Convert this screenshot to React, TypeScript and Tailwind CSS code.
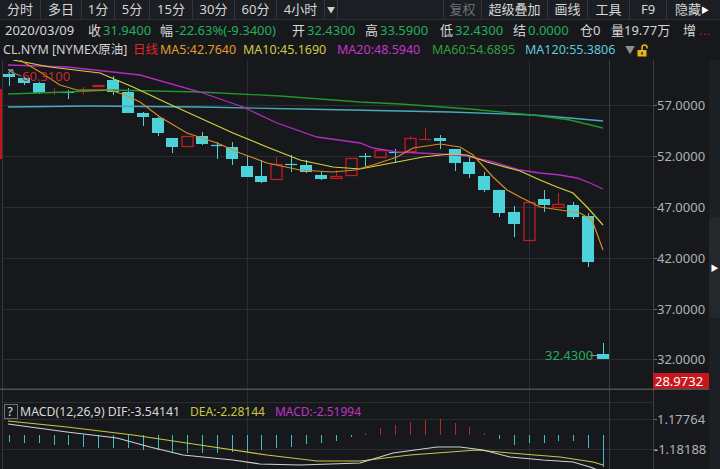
import React from "react";

const FONT = '"Noto Sans", "Noto Sans CJK SC", sans-serif';
const CYAN = "#4cd3d9";
const RED = "#c41c22";

const C = (i: number) => Math.round(9 + 14.85 * i) + 0.5;

type K = "c" | "cd" | "r" | "rd";
const candles: [K, number, number, number, number][] = [
  ["c", 74, 77, 73, 86],
  ["c", 78, 83, 77, 85],
  ["c", 83, 93, 82, 94],
  ["rd", 92, 92, 88, 95],
  ["cd", 92, 92, 90, 99],
  ["rd", 91, 91, 87, 95],
  ["r", 85, 87, 85, 87],
  ["c", 80, 92, 76, 95],
  ["c", 92, 113, 88, 113],
  ["c", 113, 117, 112, 126],
  ["c", 118, 133, 117, 136],
  ["c", 138, 147, 138, 153],
  ["r", 136, 147, 136, 147],
  ["c", 136, 144, 132, 145],
  ["cd", 145, 145, 142, 159],
  ["c", 147, 159, 142, 165],
  ["c", 166, 177, 156, 177],
  ["c", 176, 182, 160, 183],
  ["r", 164, 180, 157, 180],
  ["cd", 164, 164, 155, 172],
  ["c", 165, 172, 160, 173],
  ["c", 175, 179, 172, 180],
  ["r", 176, 179, 170, 179],
  ["r", 158, 176, 158, 176],
  ["cd", 156, 156, 153, 167],
  ["r", 150, 158, 150, 158],
  ["cd", 152, 152, 149, 163],
  ["r", 138, 152, 136, 152],
  ["rd", 139, 139, 128, 139],
  ["c", 138, 141, 135, 149],
  ["c", 149, 163, 149, 171],
  ["c", 162, 174, 156, 178],
  ["c", 176, 190, 172, 192],
  ["c", 190, 213, 190, 217],
  ["c", 212, 224, 206, 237],
  ["r", 202, 241, 202, 241],
  ["c", 199, 205, 190, 212],
  ["r", 204, 208, 193, 208],
  ["c", 205, 217, 202, 219],
  ["c", 216, 262, 213, 267],
  ["c", 354, 359, 343, 359],
];

const pts = (a: number[][]) => a.map((p) => p.join(",")).join(" ");

const ma5 = [[20,60],[40,72],[60,85],[77,90],[110,90],[125,95],[140,102],[160,117],[187,133],[217,143],[240,153],[267,163],[300,170],[333,172],[355,170],[373,165],[397,157],[413,148],[440,144],[460,147],[473,155],[493,177],[507,190],[520,197],[540,207],[560,210],[580,213],[592,220],[603,250]];
const ma10 = [[13,60],[50,67],[100,73],[133,87],[167,103],[200,118],[233,133],[267,147],[300,160],[333,167],[360,169],[397,162],[423,157],[450,154],[467,155],[487,162],[520,171],[540,180],[557,187],[573,193],[587,207],[603,225]];
const ma20 = [[8,65],[67,67],[140,75],[200,92],[243,107],[277,123],[317,137],[360,143],[373,148],[397,152],[440,154],[467,156],[493,162],[520,170],[540,173],[560,175],[577,178],[590,183],[603,189]];
const ma60 = [[8,94],[67,92],[110,90],[200,92],[280,96],[360,102],[400,104],[470,109],[533,115],[570,120],[603,128]];
const ma120 = [[8,107],[90,106],[200,107],[300,109],[400,111],[450,112],[533,115],[570,118],[603,121]];

const dif = [[8,424],[67,432],[117,438],[150,447],[183,455],[233,460],[260,464],[300,465],[360,463],[393,453],[437,447],[460,447],[483,450],[510,457],[543,460],[573,462],[590,467],[603,472]];
const dea = [[8,421],[67,427],[133,435],[200,445],[267,455],[317,461],[360,461],[410,455],[477,450],[510,453],[560,457],[593,462],[603,465]];

const hist = [442,443,443,445,445,447,448,448,448,450,450,453,453,453,453,452,452,450,448,447,444,443,441,437,433,428,425,422,420,419,423,427,433,439,445,443,443,441,441,448,467];

const priceLabels: [string, number][] = [
  ["57.0000", 105],
  ["52.0000", 156],
  ["47.0000", 207],
  ["42.0000", 258],
  ["37.0000", 309],
  ["32.0000", 359],
];

function Candle({ i, d }: { i: number; d: [K, number, number, number, number] }) {
  const x = C(i);
  const [k, bt, bb, wt, wb] = d;
  if (k === "c") {
    return (
      <g>
        <line x1={x} x2={x} y1={wt} y2={wb} stroke={CYAN} strokeWidth={1} />
        <rect x={x - 6.5} y={bt} width={12} height={Math.max(bb - bt, 1.5)} fill={CYAN} />
      </g>
    );
  }
  if (k === "cd") {
    return (
      <g>
        <line x1={x} x2={x} y1={wt} y2={wb} stroke={CYAN} strokeWidth={1} />
        <line x1={x - 6.5} x2={x + 5.5} y1={bt + 0.5} y2={bt + 0.5} stroke={CYAN} strokeWidth={1.2} />
      </g>
    );
  }
  if (k === "rd") {
    return (
      <g>
        <line x1={x} x2={x} y1={wt} y2={wb} stroke={RED} strokeWidth={1} />
        <line x1={x - 6.5} x2={x + 5.5} y1={bt + 0.5} y2={bt + 0.5} stroke={RED} strokeWidth={1.2} />
      </g>
    );
  }
  return (
    <g>
      {wt < bt && <line x1={x} x2={x} y1={wt} y2={bt} stroke={RED} strokeWidth={1} />}
      {wb > bb && <line x1={x} x2={x} y1={bb} y2={wb} stroke={RED} strokeWidth={1} />}
      <rect x={x - 5.5} y={bt + 0.5} width={11} height={Math.max(bb - bt - 1, 1)} fill="none" stroke={RED} strokeWidth={1.3} />
    </g>
  );
}

function MainChart() {
  return (
    <svg width={709} height={330} viewBox="0 60 709 330" className="block">
      <rect x={0} y={89} width={2} height={70} fill="#c0161d" />
      <line x1={2.5} x2={2.5} y1={60} y2={390} stroke="#34373c" />
      {priceLabels.map(([, y]) => (
        <g key={y}>
          <line x1={3} x2={653} y1={y + 0.5} y2={y + 0.5} stroke="#2a2d32" />
          <line x1={653} x2={657} y1={y + 0.5} y2={y + 0.5} stroke="#6a6d72" />
        </g>
      ))}
      <line x1={247.5} x2={247.5} y1={60} y2={390} stroke="#2a2d32" />
      <line x1={529.5} x2={529.5} y1={60} y2={390} stroke="#2a2d32" />
      <line x1={609.5} x2={609.5} y1={60} y2={390} stroke="#3a3d43" />
      <line x1={653.5} x2={653.5} y1={60} y2={390} stroke="#3a3d43" />

      {candles.map((d, i) => (
        <Candle key={i} i={i} d={d} />
      ))}

      <polyline points={pts(ma120)} fill="none" stroke="#4aaabb" strokeWidth={1.3} />
      <polyline points={pts(ma60)} fill="none" stroke="#22962b" strokeWidth={1.3} />
      <polyline points={pts(ma20)} fill="none" stroke="#b52cc2" strokeWidth={1.3} />
      <polyline points={pts(ma10)} fill="none" stroke="#d4d23a" strokeWidth={1.2} />
      <polyline points={pts(ma5)} fill="none" stroke="#d98a1e" strokeWidth={1.2} />

      <polyline points="8,73 13,70 8,70 13,70 13,74" fill="none" stroke="#a0a0a0" strokeWidth={0.9} />
      <line x1={9} x2={21} y1={71} y2={76} stroke="#a0a0a0" strokeWidth={0.9} />
      <text x={22} y={81} fill="#c8282e" fontSize={13} style={{ fontFamily: FONT }}>60.3100</text>

      <text x={545} y={360} fill="#22b05a" fontSize={13} style={{ fontFamily: FONT }}>32.4300</text>
      <line x1={590} x2={597} y1={355.5} y2={355.5} stroke="#8a8d92" />

      {priceLabels.map(([t, y]) => (
        <text key={t} x={657} y={y + 5} fill="#b0b2b6" fontSize={13} style={{ fontFamily: FONT }}>
          {t}
        </text>
      ))}
      <rect x={653} y={373} width={56} height={17} fill="#c8161d" />
      <text x={655} y={386} fill="#ffffff" fontSize={13} style={{ fontFamily: FONT }}>28.9732</text>

      <line x1={0} x2={709} y1={389.25} y2={389.25} stroke="#4d5055" strokeWidth={1.5} />
    </svg>
  );
}

function MacdChart() {
  return (
    <svg width={709} height={79} viewBox="0 390 709 79" className="block">
      <line x1={2.5} x2={2.5} y1={390} y2={469} stroke="#34373c" />
      {[402, 419, 449].map((y) => (
        <line key={y} x1={3} x2={653} y1={y + 0.5} y2={y + 0.5} stroke="#2a2d32" />
      ))}
      <line x1={653} x2={657} y1={419.5} y2={419.5} stroke="#6a6d72" />
      <line x1={653} x2={657} y1={449.5} y2={449.5} stroke="#6a6d72" />
      <line x1={247.5} x2={247.5} y1={390} y2={469} stroke="#2a2d32" />
      <line x1={529.5} x2={529.5} y1={390} y2={469} stroke="#2a2d32" />
      <line x1={609.5} x2={609.5} y1={390} y2={469} stroke="#3a3d43" />
      <line x1={653.5} x2={653.5} y1={390} y2={469} stroke="#3a3d43" />

      {hist.map((v, i) => (
        <line
          key={i}
          x1={C(i)}
          x2={C(i)}
          y1={435}
          y2={v}
          stroke={v < 435 ? "#b8262c" : "#3fbcc2"}
          strokeWidth={1}
        />
      ))}
      <polyline points={pts(dea)} fill="none" stroke="#c9c83c" strokeWidth={1.2} />
      <polyline points={pts(dif)} fill="none" stroke="#cfd0d2" strokeWidth={1.2} />

      <rect x={4.5} y={404.5} width={13} height={14} fill="none" stroke="#6d7075" />
      <text x={7.5} y={416} fill="#e0e0e0" fontSize={12} style={{ fontFamily: FONT }}>?</text>
      <text y={416} fontSize={13} style={{ fontFamily: FONT }}>
        <tspan x={20} fill="#d8d8d8" textLength={160} lengthAdjust="spacingAndGlyphs">MACD(12,26,9) DIF:-3.54141</tspan>
        <tspan x={190} fill="#c9c83c" textLength={75} lengthAdjust="spacingAndGlyphs">DEA:-2.28144</tspan>
        <tspan x={275} fill="#c233c8" textLength={86} lengthAdjust="spacingAndGlyphs">MACD:-2.51994</tspan>
      </text>

      <text x={657} y={424} fill="#b0b2b6" fontSize={13} style={{ fontFamily: FONT }}>1.17764</text>
      <text x={654} y={454} fill="#b0b2b6" fontSize={13} style={{ fontFamily: FONT }}>-1.18188</text>
    </svg>
  );
}

function Lock() {
  return (
    <svg width={12} height={13} viewBox="0 0 12 13">
      <path d="M5 6 V3.5 a2.5 2.5 0 0 1 5 0 V4.5" fill="none" stroke="#e3b21f" strokeWidth={1.6} />
      <rect x={0.5} y={6} width={9} height={6.5} fill="#e3b21f" />
      <rect x={4} y={8} width={2} height={2.5} fill="#5a4a10" />
    </svg>
  );
}

function Pair({ l, v, w }: { l: string; v: string; w: string }) {
  return (
    <span className={`${w} shrink-0 flex items-center`}>
      {l}
      <span className="text-[#22b05a] ml-[2px]">{v}</span>
    </span>
  );
}

export default function App() {
  const tabs: [string, string][] = [
    ["分时", "w-[41px]"],
    ["多日", "w-[41px]"],
    ["1分", "w-[33px]"],
    ["5分", "w-[35px]"],
    ["15分", "w-[43px]"],
    ["30分", "w-[42px]"],
    ["60分", "w-[42px]"],
    ["4小时", "w-[48px]"],
  ];
  return (
    <div
      className="w-[720px] h-[469px] bg-[#16181c] flex flex-col overflow-hidden text-[13px] leading-none text-[#d6d6d6]"
      style={{ fontFamily: FONT }}
    >
      {/* toolbar */}
      <div className="h-[20px] flex bg-[#1b1e22] border-b border-[#2a2d32]">
        {tabs.map(([t, w]) => (
          <div key={t} className={`${w} h-full flex items-center justify-center border-r border-[#34373d]`}>
            {t}
          </div>
        ))}
        <div className="w-[13px] h-full flex items-center justify-center border-r border-[#34373d] text-[8px] text-[#cfcfcf]">
          ▼
        </div>
        <div className="flex-1" />
        <div className="w-[39px] h-full flex items-center justify-center border-l border-r border-[#34373d] text-[#6f7176]">
          复权
        </div>
        <div className="w-[66px] h-full flex items-center justify-center border-r border-[#34373d]">超级叠加</div>
        <div className="w-[40px] h-full flex items-center justify-center border-r border-[#34373d]">画线</div>
        <div className="w-[42px] h-full flex items-center justify-center border-r border-[#34373d]">工具</div>
        <div className="w-[37px] h-full flex items-center justify-center border-r border-[#34373d]">F9</div>
        <div className="w-[53px] h-full flex items-center pl-[8px]">
          隐藏<span className="text-[8px] text-white">▶</span>
        </div>
      </div>

      {/* info row */}
      <div className="h-[20px] flex items-center pl-[5px] whitespace-nowrap">
        <span className="w-[83px] shrink-0">2020/03/09</span>
        <Pair l="收" v="31.9400" w="w-[72px]" />
        <Pair l="幅" v="-22.63%(-9.3400)" w="w-[132px]" />
        <Pair l="开" v="32.4300" w="w-[73px]" />
        <Pair l="高" v="33.5900" w="w-[75px]" />
        <Pair l="低" v="32.4300" w="w-[73px]" />
        <Pair l="结" v="0.0000" w="w-[67px]" />
        <span className="w-[31px] shrink-0">仓0</span>
        <span className="w-[72px] shrink-0">量19.77万</span>
        <span className="flex items-center">
          增<span className="text-[#d0262c] ml-[3px] text-[11px] tracking-[1px]">...</span>
        </span>
      </div>

      {/* legend row */}
      <div className="h-[20px] flex items-center pl-[3px] whitespace-nowrap text-[12.5px]">
        <span className="w-[130px] shrink-0 text-[#d2d2d2]">CL.NYM [NYMEX原油]</span>
        <span className="w-[27px] shrink-0 text-[#e0262c]">日线</span>
        <span className="w-[83px] shrink-0 text-[#e5992b]">MA5:42.7640</span>
        <span className="w-[94px] shrink-0 text-[#cdcd3c]">MA10:45.1690</span>
        <span className="w-[95px] shrink-0 text-[#c535c9]">MA20:48.5940</span>
        <span className="w-[93px] shrink-0 text-[#2ea13a]">MA60:54.6895</span>
        <span className="w-[100px] shrink-0 text-[#5ecad8]">MA120:55.3806</span>
        <span className="w-[12px] shrink-0 text-[#8e9095] text-[10px]">▼</span>
        <span className="flex items-center">
          <Lock />
        </span>
      </div>

      {/* chart area */}
      <div className="flex-1 flex">
        <div className="w-[709px] flex flex-col">
          <MainChart />
          <MacdChart />
        </div>
        <div className="flex-1 bg-[#1c1f23] flex items-center">
          <div className="w-full h-[101px] mt-[6px] rounded-l-[4px] bg-[#24272c] flex items-center justify-center text-[8px] text-white">
            ▶
          </div>
        </div>
      </div>
    </div>
  );
}
